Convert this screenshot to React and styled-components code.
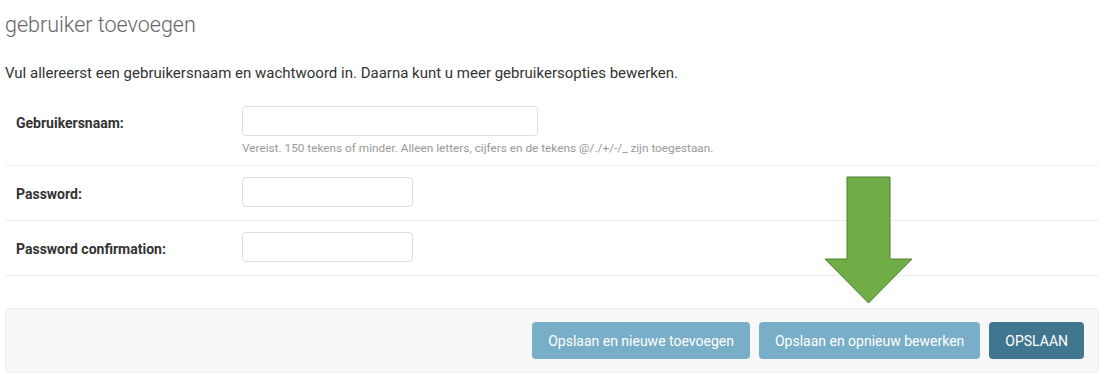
import React from "react";
import styled, { createGlobalStyle } from "styled-components";

const GlobalStyle = createGlobalStyle`
  html, body {
    margin: 0;
    padding: 0;
    background: #fff;
  }
  body {
    font-family: Roboto, "Liberation Sans", sans-serif;
    color: #333;
  }
`;

const Page = styled.div`
  position: relative;
  width: 1104px;
  height: 374px;
  padding: 0 5px;
  box-sizing: border-box;
  overflow: hidden;
`;

const Title = styled.h1`
  margin: 0;
  padding-top: 11px;
  height: 27px;
  font-size: 21.5px;
  font-weight: 300;
  line-height: 27px;
  color: #666;
`;

const Intro = styled.p`
  margin: 27px 0 0;
  font-size: 15px;
  line-height: 16px;
  color: #333;
`;

const Fieldset = styled.div`
  margin-top: 14px;
  display: flex;
  flex-direction: column;
`;

const Row = styled.div`
  display: flex;
  align-items: flex-start;
  padding: 11px 11px ${(p) => (p.$help ? "9px" : "13px")};
  border-bottom: 1px solid #eee;
`;

const Label = styled.label`
  box-sizing: border-box;
  width: 226px;
  height: 30px;
  flex: none;
  padding-top: 5px;
  font-size: 14px;
  font-weight: 700;
  line-height: 24px;
  color: #333;
`;

const Field = styled.div`
  display: flex;
  flex-direction: column;
`;

const Input = styled.input`
  box-sizing: border-box;
  width: ${(p) => p.$width}px;
  height: 30px;
  margin: 0;
  padding: 5px 6px;
  border: 1px solid #ddd;
  border-radius: 4px;
  background: #fff;
  font-family: inherit;
  font-size: 14px;
`;

const Help = styled.div`
  margin-top: 4px;
  font-size: 11.8px;
  line-height: 16px;
  color: #999;
`;

const SubmitRow = styled.div`
  margin-top: 32px;
  height: 65px;
  box-sizing: border-box;
  display: flex;
  justify-content: flex-end;
  align-items: center;
  gap: 9px;
  padding: 0 14px;
  background: #f8f8f8;
  border: 1px solid #eee;
  border-radius: 4px;
`;

const Button = styled.button`
  height: 37px;
  padding: 0 16px;
  border: none;
  border-radius: 4px;
  background: ${(p) => (p.$primary ? "#417690" : "#79aec8")};
  color: #fff;
  font-family: inherit;
  font-size: 14px;
  cursor: pointer;
`;

const Arrow = styled.svg`
  position: absolute;
  left: 824px;
  top: 176px;
`;

export default function App() {
  return (
    <Page>
      <GlobalStyle />
      <Title>gebruiker toevoegen</Title>
      <Intro>
        Vul allereerst een gebruikersnaam en wachtwoord in. Daarna kunt u meer
        gebruikersopties bewerken.
      </Intro>
      <Fieldset>
        <Row $help>
          <Label>Gebruikersnaam:</Label>
          <Field>
            <Input $width={296} />
            <Help>
              Vereist. 150 tekens of minder. Alleen letters, cijfers en de
              tekens @/./+/-/_ zijn toegestaan.
            </Help>
          </Field>
        </Row>
        <Row>
          <Label>Password:</Label>
          <Input type="password" $width={171} />
        </Row>
        <Row>
          <Label>Password confirmation:</Label>
          <Input type="password" $width={171} />
        </Row>
      </Fieldset>
      <SubmitRow>
        <Button>Opslaan en nieuwe toevoegen</Button>
        <Button>Opslaan en opnieuw bewerken</Button>
        <Button $primary>OPSLAAN</Button>
      </SubmitRow>
      <Arrow width="90" height="130" viewBox="0 0 90 130">
        <path
          d="M23 1 H66 V83 H88 L44.5 127 L1 83 H23 Z"
          fill="#70ad47"
          stroke="#507e32"
          strokeWidth="1"
        />
      </Arrow>
    </Page>
  );
}
